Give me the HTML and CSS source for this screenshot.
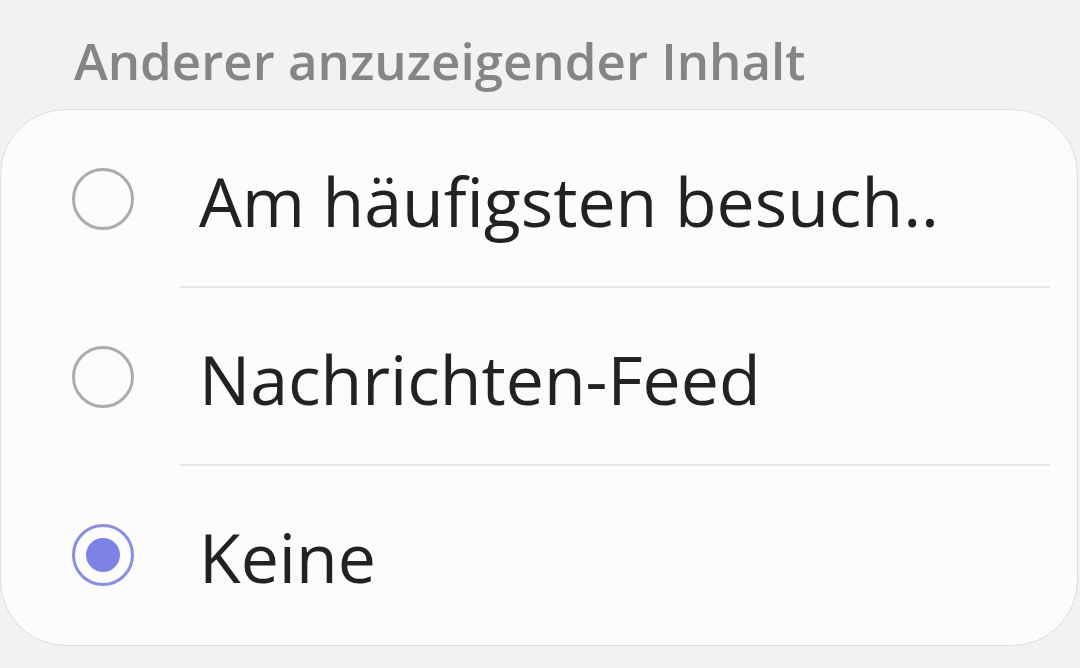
FILE: index.html
```html
<!DOCTYPE html>
<html>
<head>
  <meta charset="utf-8">
  <meta name="viewport" content="width=device-width, initial-scale=1">
  <title>Anderer anzuzeigender Inhalt</title>
  <link rel="stylesheet" href="styles.css">
</head>
<body>
  <h2 class="section-title">Anderer anzuzeigender Inhalt</h2>

  <form class="card">
    <label class="option">
      <input type="radio" name="content" value="frequent">
      <span class="radio"></span>
      <span class="option-text">Am häufigsten besuch..</span>
    </label>
    <label class="option">
      <input type="radio" name="content" value="feed">
      <span class="radio"></span>
      <span class="option-text">Nachrichten-Feed</span>
    </label>
    <label class="option">
      <input type="radio" name="content" value="none" checked>
      <span class="radio"></span>
      <span class="option-text">Keine</span>
    </label>
  </form>
</body>
</html>
```

FILE: styles.css
```css
* {
  margin: 0;
  padding: 0;
  box-sizing: border-box;
}

body {
  background-color: #f2f2f2;
  font-family: "Open Sans", "Noto Sans", sans-serif;
  width: 1080px;
  height: 668px;
  overflow: hidden;
}

.section-title {
  color: #858585;
  font-size: 51px;
  font-weight: 600;
  padding: 26px 0 0 74px;
  height: 109px;
  line-height: 68px;
}

.card {
  background-color: #fcfcfc;
  border: 1.5px solid #dedede;
  border-radius: 66px;
  margin: 0 2px 0 0;
  height: 537px;
  display: flex;
  flex-direction: column;
}

.option {
  display: flex;
  align-items: center;
  height: 178px;
  padding-left: 71px;
  position: relative;
}

.option + .option::before {
  content: "";
  position: absolute;
  top: -2px;
  left: 179px;
  right: 27px;
  height: 2px;
  background-color: #e4e4e4;
}

.option input {
  display: none;
}

.radio {
  width: 62px;
  height: 62px;
  border: 3px solid #acacac;
  border-radius: 50%;
  display: flex;
  align-items: center;
  justify-content: center;
  flex-shrink: 0;
}

.option input:checked + .radio {
  border-color: #8a8ee0;
}

.option input:checked + .radio::after {
  content: "";
  width: 34px;
  height: 34px;
  border-radius: 50%;
  background-color: #7c82e6;
}

.option-text {
  color: #222;
  font-size: 68px;
  margin-left: 65px;
  margin-top: 2px;
}
```
